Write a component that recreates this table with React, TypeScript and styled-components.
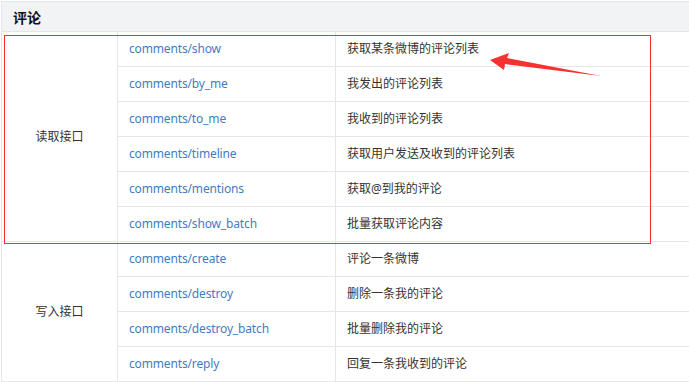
import React from "react";
import styled, { createGlobalStyle } from "styled-components";

const Global = createGlobalStyle`
  html, body { margin: 0; padding: 0; background: #fff; overflow: hidden; }
  body { font-family: "Noto Sans", "Noto Sans CJK SC", sans-serif; }
`;

const Page = styled.div`
  position: relative;
  width: 689px;
  height: 382px;
  overflow: hidden;
  padding: 1px 0 0 1px;
  box-sizing: border-box;
`;

const Table = styled.table`
  border-collapse: collapse;
  table-layout: fixed;
  width: 720px;
  font-size: 12px;
  color: #333;
`;

const HeadCell = styled.th`
  height: 29px;
  padding: 0 0 0 11px;
  background: #f2f3f5;
  border: 1px solid #e4e5e7;
  text-align: left;
  font-size: 14px;
  font-weight: bold;
  color: #111;
`;

const Cell = styled.td<{ $center?: boolean }>`
  height: 34px;
  padding: 0 11px;
  border: 1px solid #e6e6e6;
  vertical-align: middle;
  text-align: ${(p) => (p.$center ? "center" : "left")};
  white-space: nowrap;
  line-height: 16px;
`;

const Link = styled.a`
  color: #3f7cc4;
  text-decoration: none;
  letter-spacing: -0.15px;
`;

const Highlight = styled.div`
  position: absolute;
  left: 4px;
  top: 35px;
  width: 645px;
  height: 207px;
  border: 1px solid #f2302f;
  pointer-events: none;
`;

const Arrow = styled.svg`
  position: absolute;
  left: 0;
  top: 0;
  pointer-events: none;
`;

type Row = { api: string; desc: string };

const readRows: Row[] = [
  { api: "comments/show", desc: "获取某条微博的评论列表" },
  { api: "comments/by_me", desc: "我发出的评论列表" },
  { api: "comments/to_me", desc: "我收到的评论列表" },
  { api: "comments/timeline", desc: "获取用户发送及收到的评论列表" },
  { api: "comments/mentions", desc: "获取@到我的评论" },
  { api: "comments/show_batch", desc: "批量获取评论内容" },
];

const writeRows: Row[] = [
  { api: "comments/create", desc: "评论一条微博" },
  { api: "comments/destroy", desc: "删除一条我的评论" },
  { api: "comments/destroy_batch", desc: "批量删除我的评论" },
  { api: "comments/reply", desc: "回复一条我收到的评论" },
];

function Group({ label, rows }: { label: string; rows: Row[] }) {
  return (
    <>
      {rows.map((r, i) => (
        <tr key={r.api}>
          {i === 0 && (
            <Cell $center rowSpan={rows.length}>
              {label}
            </Cell>
          )}
          <Cell>
            <Link href="#">{r.api}</Link>
          </Cell>
          <Cell>{r.desc}</Cell>
        </tr>
      ))}
    </>
  );
}

export default function App() {
  return (
    <Page>
      <Global />
      <Table>
        <colgroup>
          <col style={{ width: 116 }} />
          <col style={{ width: 218 }} />
          <col />
        </colgroup>
        <thead>
          <tr>
            <HeadCell colSpan={3}>评论</HeadCell>
          </tr>
        </thead>
        <tbody>
          <Group label="读取接口" rows={readRows} />
          <Group label="写入接口" rows={writeRows} />
        </tbody>
      </Table>
      <Highlight />
      <Arrow width="689" height="382" viewBox="0 0 689 382">
        <polygon
          points="490,60 509,53 507,58 601,76 505,64 504,70"
          fill="#f5322f"
        />
      </Arrow>
    </Page>
  );
}
